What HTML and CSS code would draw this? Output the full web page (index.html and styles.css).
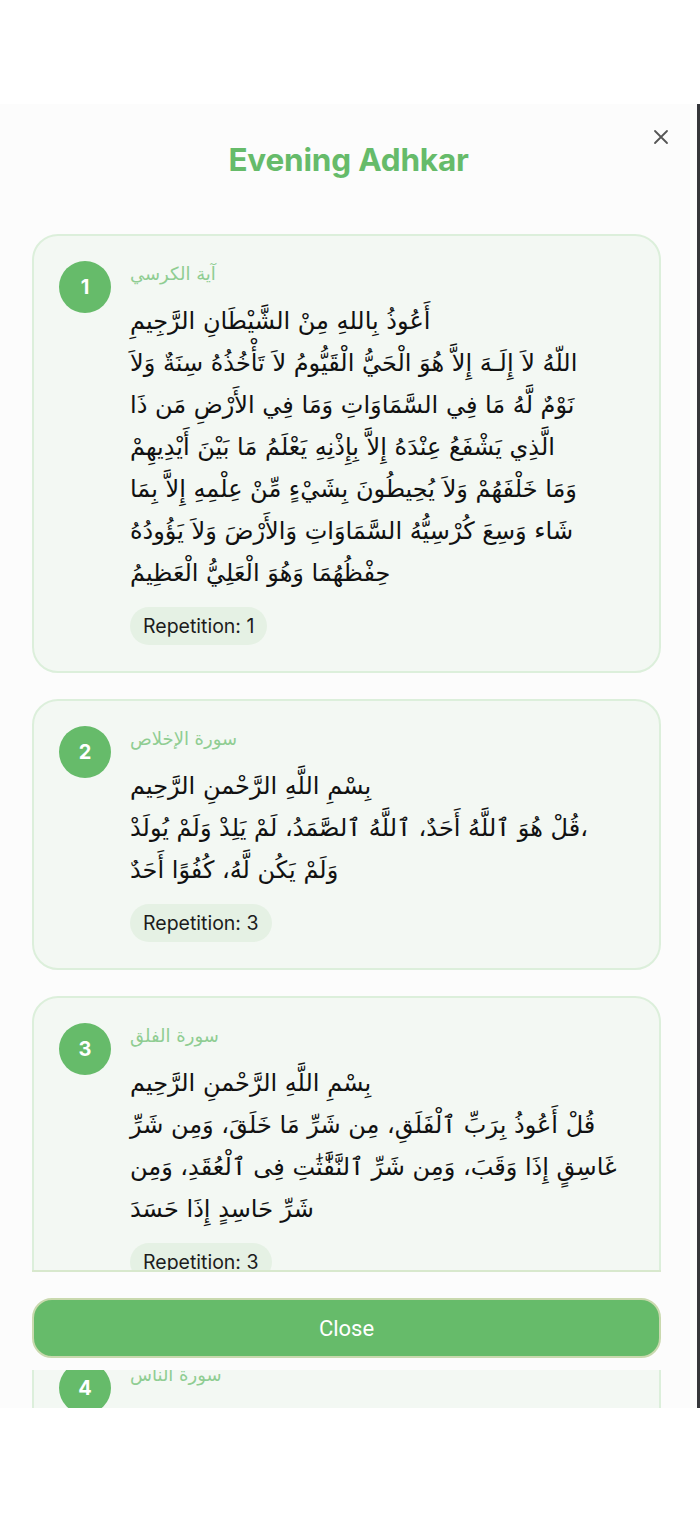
FILE: index.html
```html
<!DOCTYPE html>
<html lang="en">
<head>
  <meta charset="UTF-8" />
  <meta name="viewport" content="width=device-width, initial-scale=1.0" />
  <title>Evening Adhkar</title>
  <link rel="stylesheet" href="styles.css">
</head>
<body>
  <div class="sheet">
    <button class="close-x" aria-label="Close">
      <svg width="16" height="16" viewBox="0 0 16 16"><path d="M2 2 L14 14 M14 2 L2 14" stroke="#555" stroke-width="1.8" stroke-linecap="round" fill="none"/></svg>
    </button>

    <div class="sheet-header">
      <h1>Evening Adhkar</h1>
    </div>

    <div class="list">
      <div class="card">
        <div class="num">1</div>
        <div class="body">
          <div class="dhikr-title">آية الكرسي</div>
          <p class="dhikr-text">أَعُوذُ بِاللهِ مِنْ الشَّيْطَانِ الرَّجِيمِ
اللّهُ لاَ إِلَـهَ إِلاَّ هُوَ الْحَيُّ الْقَيُّومُ لاَ تَأْخُذُهُ سِنَةٌ وَلاَ
نَوْمٌ لَّهُ مَا فِي السَّمَاوَاتِ وَمَا فِي الأَرْضِ مَن ذَا
الَّذِي يَشْفَعُ عِنْدَهُ إِلاَّ بِإِذْنِهِ يَعْلَمُ مَا بَيْنَ أَيْدِيهِمْ
وَمَا خَلْفَهُمْ وَلاَ يُحِيطُونَ بِشَيْءٍ مِّنْ عِلْمِهِ إِلاَّ بِمَا
شَاء وَسِعَ كُرْسِيُّهُ السَّمَاوَاتِ وَالأَرْضَ وَلاَ يَؤُودُهُ
حِفْظُهُمَا وَهُوَ الْعَلِيُّ الْعَظِيمُ</p>
          <span class="badge">Repetition: 1</span>
        </div>
      </div>

      <div class="card">
        <div class="num">2</div>
        <div class="body">
          <div class="dhikr-title">سورة الإخلاص</div>
          <p class="dhikr-text">بِسْمِ اللَّهِ الرَّحْمنِ الرَّحِيم
قُلْ هُوَ ٱللَّهُ أَحَدٌ، ٱللَّهُ ٱلصَّمَدُ، لَمْ يَلِدْ وَلَمْ يُولَدْ،
وَلَمْ يَكُن لَّهُ، كُفُوًا أَحَدٌ</p>
          <span class="badge">Repetition: 3</span>
        </div>
      </div>

      <div class="card">
        <div class="num">3</div>
        <div class="body">
          <div class="dhikr-title">سورة الفلق</div>
          <p class="dhikr-text">بِسْمِ اللَّهِ الرَّحْمنِ الرَّحِيم
قُلْ أَعُوذُ بِرَبِّ ٱلْفَلَقِ، مِن شَرِّ مَا خَلَقَ، وَمِن شَرِّ
غَاسِقٍ إِذَا وَقَبَ، وَمِن شَرِّ ٱلنَّفَّٰثَٰتِ فِى ٱلْعُقَدِ، وَمِن
شَرِّ حَاسِدٍ إِذَا حَسَدَ</p>
          <span class="badge">Repetition: 3</span>
        </div>
      </div>

      <div class="card">
        <div class="num">4</div>
        <div class="body">
          <div class="dhikr-title">سورة الناس</div>
        </div>
      </div>
    </div>

    <div class="sheet-footer">
      <button class="close-btn">Close</button>
    </div>
  </div>
</body>
</html>
```

FILE: styles.css
```css
body { margin: 0; background: #fff; font-family: Inter, "Noto Sans", sans-serif; }

.sheet {
  position: relative;
  margin-top: 104px;
  height: 1304px;
  background: #fcfcfc;
  border-right: 3px solid #35363a;
  display: flex;
  flex-direction: column;
  overflow: hidden;
}

.close-x {
  position: absolute;
  top: 25px;
  right: 28px;
  width: 16px;
  height: 16px;
  padding: 0;
  border: none;
  background: none;
}
.close-x svg { display: block; }

.sheet-header { padding-top: 38px; box-sizing: border-box; height: 130px; }
.sheet-header h1 {
  margin: 0;
  text-align: center;
  font-size: 31.5px;
  line-height: 36px;
  font-weight: 700;
  color: #66bb6a;
  letter-spacing: -0.2px;
}

.list {
  flex: 1;
  overflow: hidden;
  padding: 0 36px 0 32px;
  display: flex;
  flex-direction: column;
  gap: 26px;
}

.card {
  flex-shrink: 0;
  display: flex;
  gap: 19px;
  align-items: flex-start;
  background: #f3f8f3;
  border: 2px solid #dcefdb;
  border-radius: 26px;
  padding: 25px 24px 26px 25px;
}

.num {
  flex-shrink: 0;
  width: 52px;
  height: 52px;
  border-radius: 50%;
  background: #66bb6a;
  color: #fff;
  font-weight: 700;
  font-size: 20px;
  display: flex;
  align-items: center;
  justify-content: center;
}

.body { flex: 1; }

.dhikr-title {
  font-family: "DejaVu Sans", sans-serif;
  font-size: 18px;
  line-height: 26px;
  color: #8fcd92;
}

.dhikr-text {
  margin: 13px 0 13px 0;
  white-space: pre-line;
  font-family: "DejaVu Sans", sans-serif;
  font-size: 24px;
  line-height: 42px;
  color: #111;
}

.badge {
  display: inline-block;
  height: 38px;
  line-height: 38px;
  padding: 0 13px;
  border-radius: 19px;
  background: #e5f1e4;
  color: #1c1c1c;
  font-size: 19.5px;
}

.sheet-footer {
  position: absolute;
  left: 32px;
  right: 36px;
  bottom: 38px;
  height: 100px;
  box-sizing: border-box;
  background: #fcfcfc;
  border-top: 2px solid #d8e8cd;
  padding-top: 26px;
}

.close-btn {
  display: block;
  width: 100%;
  height: 60px;
  border: 2px solid #c9d9ae;
  border-radius: 20px;
  background: #66bb6a;
  color: #fff;
  font-family: Roboto, sans-serif;
  font-size: 22px;
  cursor: pointer;
}
```
